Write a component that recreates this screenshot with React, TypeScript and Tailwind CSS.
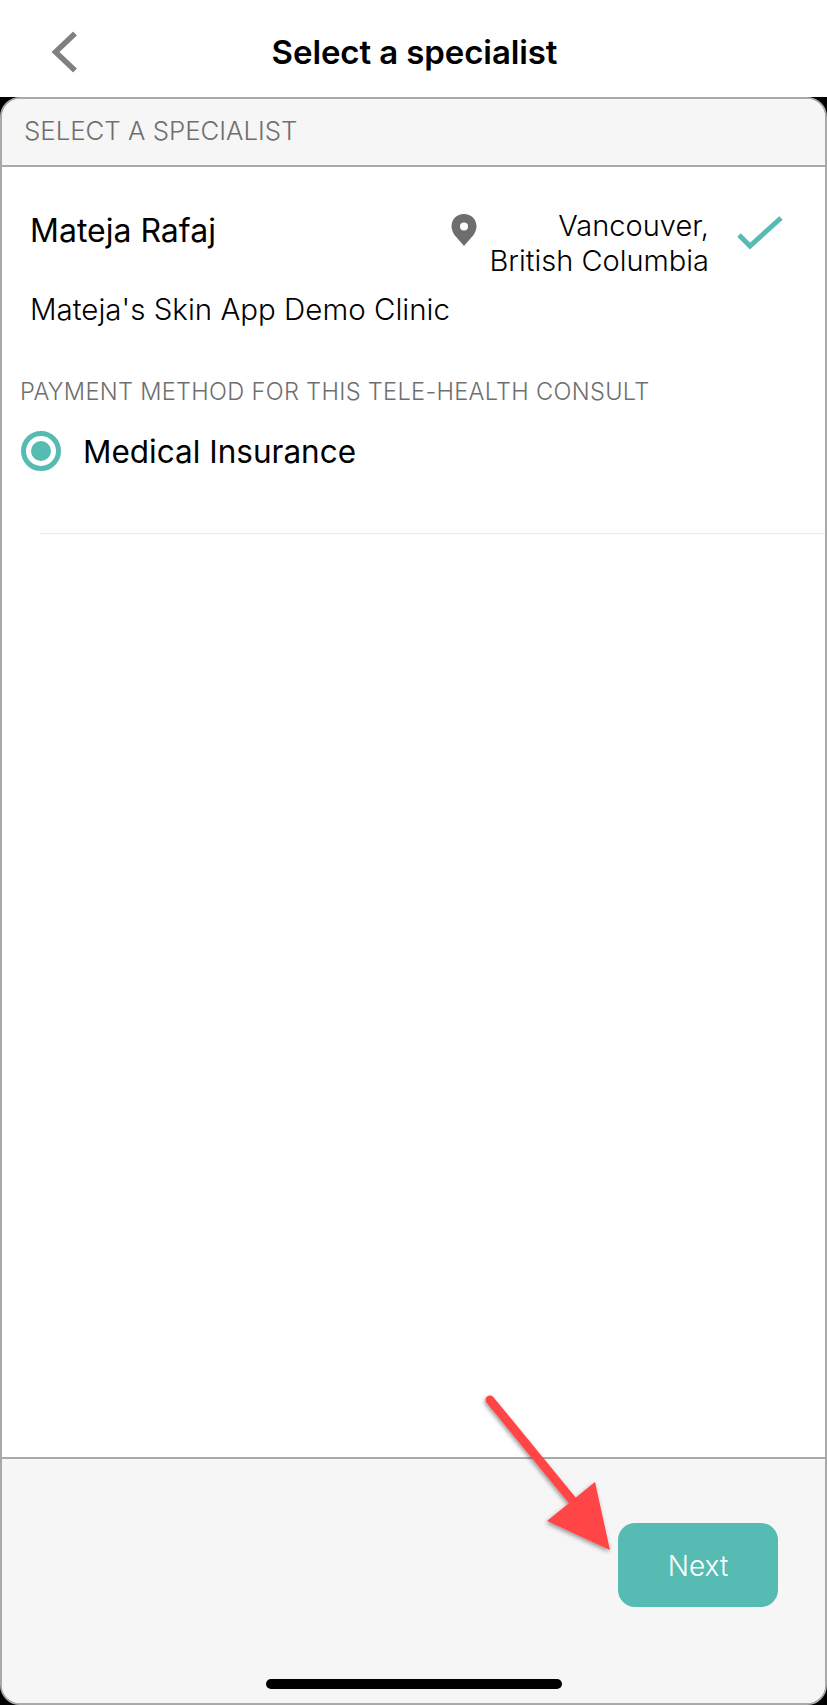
export default function App() {
  return (
    <div className="relative flex h-[1705px] w-[827px] flex-col overflow-hidden bg-black font-['Inter',sans-serif] text-black">
      <header className="relative flex h-[97px] shrink-0 items-center justify-center bg-white pt-[8px]">
        <svg className="absolute left-[50px] top-[30px]" width="30" height="44" viewBox="0 0 30 44" fill="none">
          <path d="M25 3.5 L5.5 22 L25 40.5" stroke="#808080" strokeWidth="5.5" />
        </svg>
        <h1 className="pl-[2px] text-[33px] font-semibold leading-none tracking-[-0.1px]">Select a specialist</h1>
      </header>

      <main className="flex min-h-0 flex-1 flex-col rounded-[20px] border-2 border-[#a9a9a9] bg-white">
        <div className="flex h-[68px] shrink-0 items-center rounded-t-[18px] border-b-2 border-[#a9a9a9] bg-[#f6f6f6] pb-[3px] pl-[22px]">
          <span className="text-[25.8px] font-light leading-none text-[#6f6f6f]">SELECT A SPECIALIST</span>
        </div>

        <div className="flex-1">
          <div className="flex items-start pl-[28px] pr-[39px] pt-[43px]">
            <div className="flex-1 text-[32px] leading-[42px]">Mateja Rafaj</div>
            <svg className="mt-[4px]" width="26" height="32" viewBox="0 0 26 32">
              <path
                fillRule="evenodd"
                fill="#6e6e6e"
                d="M13 0C5.800 0 .5 5.400.5 12.200c0 3.200 1.300 6 3 8.800L13 32l9.500-11c1.700-2.800 3-5.600 3-8.800C25.500 5.400 20.200 0 13 0Zm0 8.500a4 4 0 1 1 0 8 4 4 0 0 1 0-8Z"
              />
            </svg>
            <div className="mt-[-2px] w-[232px] text-right text-[29px] font-light leading-[35px]">
              Vancouver,
              <br />
              British Columbia
            </div>
            <svg className="ml-[27px] mt-[-2px] blur-[0.5px]" width="50" height="44" viewBox="0 0 50 44" fill="none">
              <path d="M3 27 L14 38 L45 10" stroke="#56bbb2" strokeWidth="5" />
            </svg>
          </div>

          <div className="pl-[28px] pt-[11px] text-[29.5px] font-light leading-[40px]">Mateja's Skin App Demo Clinic</div>

          <div className="pl-[18px] pt-[48px] text-[23.6px] font-light leading-[30px] tracking-[0.3px] text-[#6f6f6f]">
            PAYMENT METHOD FOR THIS TELE-HEALTH CONSULT
          </div>

          <div className="ml-[19px] mt-[23px] flex items-center">
            <span className="flex h-[40px] w-[40px] items-center justify-center rounded-full border-[5px] border-[#56bbb2]">
              <span className="h-[20px] w-[20px] rounded-full bg-[#56bbb2]" />
            </span>
            <span className="ml-[22px] pt-[2px] text-[31.5px] leading-[40px]">Medical Insurance</span>
          </div>

          <div className="ml-[38px] mt-[61px] h-px bg-[#ebebeb]" />
        </div>

        <footer className="flex h-[246px] shrink-0 flex-col rounded-b-[18px] border-t-2 border-[#a9a9a9] bg-[#f6f6f6]">
          <div className="flex justify-end pr-[47px] pt-[64px]">
            <button className="flex h-[84px] w-[160px] items-center justify-center rounded-[17px] bg-[#56bbb2] pt-[2px] text-[28px] font-light text-white">
              Next
            </button>
          </div>
          <div className="mx-auto mt-[72px] h-[10px] w-[296px] rounded-full bg-black" />
        </footer>
      </main>

      {/* red annotation arrow over the button */}
      <svg className="absolute left-[480px] top-[1390px]" width="150" height="180" viewBox="480 1390 150 180" fill="none">
        <defs>
          <filter id="arrowShadow" x="-20%" y="-20%" width="140%" height="140%">
            <feDropShadow dx="-1" dy="2" stdDeviation="2" floodColor="#000" floodOpacity="0.4" />
          </filter>
        </defs>
        <g filter="url(#arrowShadow)">
          <path d="M490 1400 L572 1500" stroke="#ff4545" strokeWidth="9" strokeLinecap="round" />
          <path d="M595 1482 L610 1550 L547 1521 Z" fill="#ff4545" />
        </g>
      </svg>
    </div>
  );
}
